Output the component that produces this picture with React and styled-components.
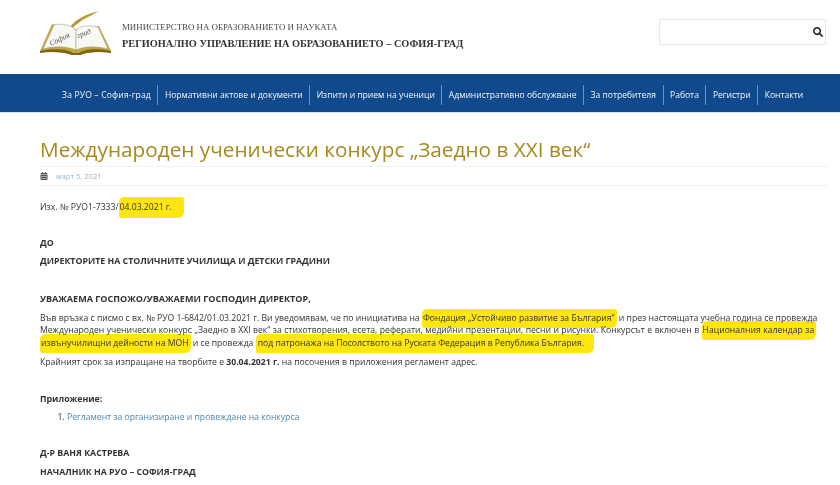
import React from 'react';
import styled, { createGlobalStyle } from 'styled-components';
import { FaSearch, FaCalendarAlt } from 'react-icons/fa';

const GlobalStyle = createGlobalStyle`
  html, body {
    margin: 0;
    padding: 0;
    background: #fff;
    overflow: hidden;
  }
`;

const Page = styled.div`
  width: 840px;
  height: 485px;
  overflow: hidden;
  font-family: "Open Sans", sans-serif;
  color: #333;
`;

const Header = styled.header`
  height: 74px;
  display: flex;
  align-items: flex-start;
  justify-content: space-between;
  padding: 0 14px 0 40px;
  box-sizing: border-box;
`;

const Brand = styled.div`
  display: flex;
  align-items: flex-start;
  gap: 11px;
  padding-top: 10px;
`;

const BrandText = styled.div`
  padding-top: 11px;
  font-family: "Liberation Serif", serif;
`;

const Ministry = styled.div`
  font-size: 8.85px;
  line-height: 13px;
  color: #4a4a4a;
`;

const Office = styled.div`
  font-size: 10.3px;
  line-height: 15px;
  margin-top: 2px;
  font-weight: 700;
  color: #333;
`;

const SearchBox = styled.div`
  width: 167px;
  height: 26px;
  margin-top: 19px;
  border: 1px solid #e8e8e8;
  box-sizing: border-box;
  display: flex;
  align-items: center;
  justify-content: flex-end;
  padding-right: 2px;
  color: #222;
  font-size: 10px;
`;

const Nav = styled.nav`
  height: 39px;
  background: #114a8c;
  border-bottom: 1px solid #d5e4f2;
  box-sizing: border-box;
  display: flex;
  align-items: center;
  padding: 3px 0 0 55.5px;
`;

const NavItem = styled.a`
  color: #f2f6fb;
  font-size: 8.55px;
  line-height: 20px;
  padding: 0 6.5px;
  white-space: nowrap;
  letter-spacing: ${p => (p.$first ? 0.16 : 0)}px;
  border-left: ${p => (p.$first ? 'none' : '1px solid #6f93bd')};
`;

const Main = styled.main`
  padding: 22px 12px 0 40px;
`;

const Title = styled.h1`
  margin: 0;
  font-family: "Open Sans", sans-serif;
  font-weight: 400;
  font-size: 20.75px;
  line-height: 29px;
  color: #a78a1d;
  white-space: nowrap;
  border-bottom: 1px solid #f2f2f2;
  padding-bottom: 2px;
`;

const Meta = styled.div`
  height: 18px;
  display: flex;
  align-items: center;
  gap: 8px;
  font-size: 7.6px;
  color: #9ab3c6;
  border-bottom: 1px solid #f0f0f0;
  svg { color: #555; }
`;

const Line = styled.p`
  margin: ${p => p.$top || 0}px 0 0;
  font-size: ${p => p.$size || 8.65}px;
  line-height: 12.5px;
  color: #333;
  white-space: nowrap;
  font-weight: ${p => (p.$bold ? 700 : 400)};
`;

const Letter = styled.div`
  margin: ${p => p.$top || 0}px 0 0;
  font-size: 8.65px;
  line-height: 12.4px;
  color: #333;
`;

const LetterRow = styled.div`
  white-space: nowrap;
  word-spacing: ${p => p.$spread || 0}px;
`;

const Mark = styled.span`
  background: #ffe60f;
  mix-blend-mode: multiply;
  padding: ${p => p.$pad || '3px 2px 4px 1px'};
  border-radius: 5px 2px 6px 2px;
`;

const Files = styled.ol`
  margin: 6px 0 0;
  padding-left: 27px;
  font-size: 8.65px;
  line-height: 13px;
`;

const FileLink = styled.a`
  color: #4f86ad;
`;

const BookLogo = () => (
  <svg width="71" height="48" viewBox="0 0 71 48">
    <path d="M30 17 C36 9 46 4 59 1 C53 4 49 7 44 9 C40 12 36 14 33 18 Z" fill="#b99a2c" />
    <path d="M12 14 L0 41 L36 44 L71 41 L59 16 L36 19 Z" fill="#c4a544" />
    <path d="M14 15 C22 13 31 15 36 20 L36 40 C27 36 12 36 3 39 Z" fill="#f8f8f4" stroke="#a8a48c" strokeWidth="0.6" />
    <path d="M36 20 C42 15 50 15 58 17 L68 39 C56 36 45 36 36 40 Z" fill="#f8f8f4" stroke="#a8a48c" strokeWidth="0.6" />
    <path d="M0 41 C12 38 28 39 33 43 H39 C44 39 58 38 71 41 L71 43 C58 41 46 42 41 45 H31 C26 42 12 41 0 43 Z" fill="#7f6412" />
    <text x="11" y="36" fontFamily="Liberation Serif" fontStyle="italic" fontSize="7.5" fill="#555" transform="rotate(-26 11 36)">София</text>
    <text x="38" y="28" fontFamily="Liberation Serif" fontStyle="italic" fontSize="7.5" fill="#555" transform="rotate(-20 38 28)">град</text>
  </svg>
);

const navItems = [
  'За РУО – София-град',
  'Нормативни актове и документи',
  'Изпити и прием на ученици',
  'Административно обслужване',
  'За потребителя',
  'Работа',
  'Регистри',
  'Контакти',
];

const App = () => (
  <Page>
    <GlobalStyle />
    <Header>
      <Brand>
        <BookLogo />
        <BrandText>
          <Ministry>МИНИСТЕРСТВО НА ОБРАЗОВАНИЕТО И НАУКАТА</Ministry>
          <Office>РЕГИОНАЛНО УПРАВЛЕНИЕ НА ОБРАЗОВАНИЕТО – СОФИЯ-ГРАД</Office>
        </BrandText>
      </Brand>
      <SearchBox><FaSearch /></SearchBox>
    </Header>
    <Nav>
      {navItems.map((item, i) => <NavItem key={item} $first={i === 0}>{item}</NavItem>)}
    </Nav>
    <Main>
      <Title>Международен ученически конкурс „Заедно в XXI век“</Title>
      <Meta><FaCalendarAlt size={8} />март 5, 2021</Meta>
      <Line $top={15}>Изх. № РУО1-7333/<Mark $pad="4px 12px 5px 1px">04.03.2021 г.</Mark></Line>
      <Line $top={23} $bold $size={8.8}>ДО</Line>
      <Line $top={6} $bold $size={8.8}>ДИРЕКТОРИТЕ НА СТОЛИЧНИТЕ УЧИЛИЩА И ДЕТСКИ ГРАДИНИ</Line>
      <Line $top={25} $bold $size={9.05}>УВАЖАЕМА ГОСПОЖО/УВАЖАЕМИ ГОСПОДИН ДИРЕКТОР,</Line>
      <Letter $top={7}>
        <LetterRow>Във връзка с писмо с вх. № РУО 1-6842/01.03.2021 г. Ви уведомявам, че по инициатива на <Mark>Фондация „Устойчиво развитие за България“</Mark> и през настоящата учебна година се провежда</LetterRow>
        <LetterRow $spread={0.25}>Международен ученически конкурс „Заедно в XXI век“ за стихотворения, есета, реферати, медийни презентации, песни и рисунки. Конкурсът е включен в <Mark>Националния календар за</Mark></LetterRow>
        <LetterRow><Mark>извънучилищни дейности на МОН</Mark> и се провежда <Mark $pad="3px 10px 4px 2px">под патронажа на Посолството на Руската Федерация в Република България.</Mark></LetterRow>
      </Letter>
      <Line $top={7}>Крайният срок за изпращане на творбите е <b>30.04.2021 г.</b> на посочения в приложения регламент адрес.</Line>
      <Line $top={24} $bold $size={8.8}>Приложение:</Line>
      <Files>
        <li><FileLink>Регламент за организиране и провеждане на конкурса</FileLink></li>
      </Files>
      <Line $top={23} $bold $size={8.8}>Д-Р ВАНЯ КАСТРЕВА</Line>
      <Line $top={6} $bold $size={8.8}>НАЧАЛНИК НА РУО – СОФИЯ-ГРАД</Line>
    </Main>
  </Page>
);

export default App;
